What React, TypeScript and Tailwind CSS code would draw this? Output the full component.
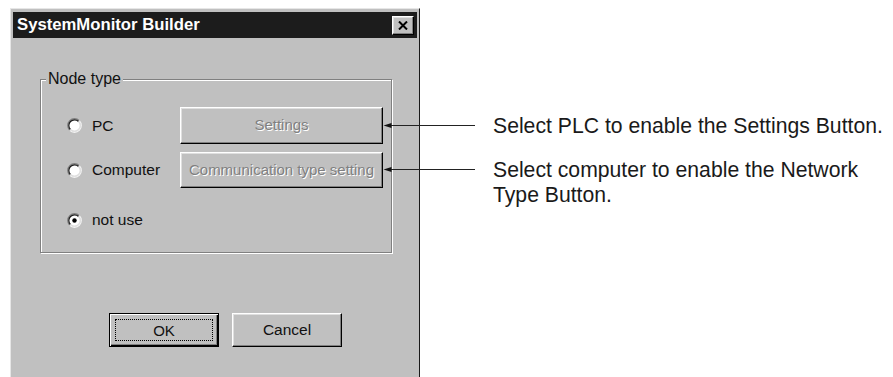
import React from 'react';

const bevel =
  'border-l border-t border-l-white border-t-white border-r border-b border-r-black border-b-black shadow-[inset_-1px_-1px_0_#808080,inset_1px_1px_0_#dfdfdf]';

function Radio({ checked }: { checked?: boolean }) {
  const c = 7.5;
  const arc = (r: number, sweep: number, color: string) => {
    const d = r * 0.7071;
    return (
      <path
        d={`M ${c - d} ${c + d} A ${r} ${r} 0 0 ${sweep} ${c + d} ${c - d}`}
        fill="none"
        stroke={color}
        strokeWidth="1.2"
      />
    );
  };
  return (
    <svg width="15" height="15" viewBox="0 0 15 15" className="shrink-0">
      <circle cx={c} cy={c} r="6" fill="#fff" />
      {arc(6.8, 1, '#808080')}
      {arc(6.8, 0, '#f4f4f4')}
      {arc(5.7, 1, '#1a1a1a')}
      {arc(5.7, 0, '#dfdfdf')}
      {checked && <circle cx={c} cy={c} r="2.2" fill="#000" />}
    </svg>
  );
}

function Leader({ top }: { top: number }) {
  return (
    <svg
      width="93"
      height="9"
      viewBox="0 0 93 9"
      className="absolute left-[383px]"
      style={{ top }}
    >
      <line x1="4" y1="4.5" x2="92" y2="4.5" stroke="#222" strokeWidth="1" />
      <polygon points="0.5,4.5 8.5,2 8.5,7" fill="#111" />
    </svg>
  );
}

function NodeRow({
  label,
  checked,
  button,
  className,
}: {
  label: string;
  checked?: boolean;
  button?: string;
  className: string;
}) {
  return (
    <div className={`flex items-center ${className}`}>
      <div className="flex w-[139px] items-center gap-[10px] pl-[26px]">
        <Radio checked={checked} />
        <span className="text-[15.5px] leading-none text-[#111]">{label}</span>
      </div>
      {button && (
        <div
          className={`flex h-full w-[203px] items-center justify-center bg-[#c0c0c0] text-[15px] text-[#808080] [text-shadow:1px_1px_0_#fff] ${bevel}`}
        >
          {button}
        </div>
      )}
    </div>
  );
}

export default function App() {
  return (
    <div className="relative flex h-[377px] w-[893px] overflow-hidden bg-white font-['Liberation_Sans',Arial,sans-serif]">
      <div className="ml-[10px] mt-[8px] flex h-[369px] w-[410px] flex-col border-l border-t border-r border-l-[#e6e6e6] border-t-[#e6e6e6] border-r-[#1a1a1a] bg-[#c0c0c0] px-[2px] pt-[3px]">
        <div className="flex h-[26px] items-center justify-between bg-[#1c1c1c] pl-[4px] pr-[3px]">
          <span className="text-[16.7px] font-bold leading-none text-white">SystemMonitor Builder</span>
          <div className={`flex h-[19px] w-[22px] items-center justify-center bg-[#c0c0c0] ${bevel}`}>
            <svg width="10" height="9" viewBox="0 0 10 9">
              <path d="M1 0.5 L9 8.5 M9 0.5 L1 8.5" stroke="#000" strokeWidth="2" />
            </svg>
          </div>
        </div>

        <fieldset className="ml-[27px] mt-[33px] h-[182px] w-[352px] border border-[#808080] shadow-[inset_1px_1px_0_#fff,1px_1px_0_#fff]">
          <legend className="ml-[5px] bg-[#c0c0c0] px-[2px] text-[16px] leading-[16px] text-[#111]">Node type</legend>
          <NodeRow label="PC" button="Settings" className="mt-[20px] h-[37px]" />
          <NodeRow label="Computer" button="Communication type setting" className="mt-[8px] h-[36px]" />
          <NodeRow label="not use" checked className="mt-[14px] h-[36px]" />
        </fieldset>

        <div className="ml-[96px] mt-[60px] flex gap-[13px]">
          <button className="flex h-[34px] w-[110px] border border-black bg-[#c0c0c0] p-[5px] shadow-[inset_1px_1px_0_#fff,inset_-1px_-1px_0_#000,inset_-2px_-2px_0_#808080]">
            <span className="flex h-full w-full items-center justify-center border border-dotted border-black text-[15px] leading-none text-[#111]">
              OK
            </span>
          </button>
          <button
            className={`flex h-[34px] w-[110px] items-center justify-center bg-[#c0c0c0] text-[15.5px] leading-none text-[#111] ${bevel}`}
          >
            Cancel
          </button>
        </div>
      </div>

      <div className="ml-[73px] flex flex-col pt-[113px] text-[21.2px] leading-[25px] text-[#1a1a1a]">
        <p className="whitespace-nowrap">Select PLC to enable the Settings Button.</p>
        <p className="mt-[19px] whitespace-nowrap">
          Select computer to enable the Network
          <br />
          Type Button.
        </p>
      </div>

      <Leader top={121} />
      <Leader top={165} />
    </div>
  );
}
